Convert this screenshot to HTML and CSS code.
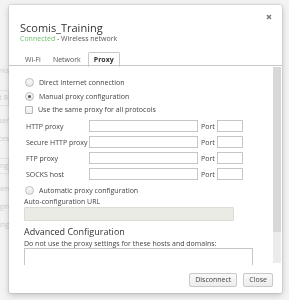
FILE: index.html
```html
<!DOCTYPE html>
<html lang="en">
<head>
    <meta charset="UTF-8">
    <title>Scomis_Training</title>
    <link rel="stylesheet" href="styles.css">
</head>
<body>
    <div class="page">
        <div class="page-row">Networks</div>
        <div class="page-row boxed">Reset R</div>
        <div class="page-row">User</div>
        <div class="page-row">Services</div>
        <div class="page-row boxed">Setting</div>
        <div class="page-row">Open</div>
        <div class="page-row">Login</div>
        <div class="page-row">Timing</div>
    </div>

    <div class="dialog">
        <button class="close" title="Close">
            <svg width="6" height="6" viewBox="0 0 6 6"><path d="M1 1L5 5M5 1L1 5" stroke="#777" stroke-width="1.4"/></svg>
        </button>
        <div class="head">
            <h1>Scomis_Training</h1>
            <p class="status"><span class="ok">Connected</span> - Wireless network</p>
        </div>
        <div class="tabs">
            <span class="tab">Wi-Fi</span>
            <span class="tab">Network</span>
            <span class="tab active">Proxy</span>
        </div>
        <div class="pane">
            <div class="scroll">
                <label class="opt"><span class="radio"></span>Direct Internet connection</label>
                <label class="opt"><span class="radio checked"></span>Manual proxy configuration</label>
                <label class="opt check-row"><span class="check"></span>Use the same proxy for all protocols</label>

                <div class="proxy-grid">
                    <span class="name">HTTP proxy</span><span class="field"></span><span class="port">Port</span><span class="field small"></span>
                    <span class="name">Secure HTTP proxy</span><span class="field"></span><span class="port">Port</span><span class="field small"></span>
                    <span class="name">FTP proxy</span><span class="field"></span><span class="port">Port</span><span class="field small"></span>
                    <span class="name">SOCKS host</span><span class="field"></span><span class="port">Port</span><span class="field small"></span>
                </div>

                <label class="opt auto"><span class="radio"></span>Automatic proxy configuration</label>
                <div class="sub-label">Auto-configuration URL</div>
                <div class="field url disabled"></div>

                <h2>Advanced Configuration</h2>
                <div class="desc">Do not use the proxy settings for these hosts and domains:</div>
                <div class="hosts"></div>
            </div>
            <div class="scrollbar"><div class="thumb"></div></div>
        </div>
        <div class="actions">
            <button class="btn">Disconnect</button>
            <button class="btn">Close</button>
        </div>
    </div>
</body>
</html>
```

FILE: styles.css
```css
body {
    margin: 0;
    width: 289px;
    height: 300px;
    overflow: hidden;
    background-color: #f3f3f3;
    font-family: 'Open Sans', 'Noto Sans', sans-serif;
    font-size: 7px;
    color: #444;
}
.page {
    width: 60px;
    margin-left: -51px;
    padding-top: 64px;
    text-align: right;
    color: #cfcfcf;
    font-size: 7px;
}
.page-row {
    height: 18px;
    line-height: 14px;
    white-space: nowrap;
}
.page-row.boxed {
    border: 1px solid #e4e4e4;
    height: 14px;
    margin: 8px 0;
}
.dialog {
    position: fixed;
    left: 9px;
    top: 5px;
    width: 273px;
    height: 288px;
    background: #fff;
    border-radius: 2px;
    box-shadow: 0 0 0 1px rgba(0, 0, 0, 0.07), 0 2px 6px rgba(0, 0, 0, 0.22);
    display: flex;
    flex-direction: column;
}
.close {
    position: absolute;
    right: 10px;
    top: 9px;
    padding: 0;
    border: 0;
    background: none;
    width: 6px;
    height: 6px;
    line-height: 0;
}
.head {
    padding: 17px 11px 0;
}
.head h1 {
    margin: 0;
    font-size: 11px;
    line-height: 12px;
    font-weight: 400;
    color: #333;
}
.status {
    margin: 0;
    line-height: 9px;
    color: #555;
}
.ok {
    color: #6cc26c;
}
.tabs {
    display: flex;
    margin-top: 10px;
    padding-left: 11px;
    border-bottom: 1px solid #c8c8c8;
    height: 12px;
}
.tab {
    padding: 0 5px;
    margin-right: 2px;
    line-height: 13px;
    color: #555;
}
.active {
    border: 1px solid #c8c8c8;
    border-bottom: 1px solid #fff;
    border-radius: 2px 2px 0 0;
    font-weight: 700;
    color: #333;
    line-height: 11px;
    height: 12px;
    padding-top: 1px;
    margin-top: -1px;
}
.pane {
    height: 199px;
    display: flex;
    overflow: hidden;
}
.scroll {
    flex: 1;
    padding: 9px 0 0 15px;
    overflow: hidden;
}
.scrollbar {
    width: 8px;
    margin: 1px 1px 2px 0;
    background: #ececec;
}
.thumb {
    height: 165px;
    background: #d8d8d8;
    border-radius: 1px;
}
.opt {
    display: flex;
    align-items: center;
    height: 14px;
    color: #444;
}
.check-row {
    height: 13px;
}
.radio {
    width: 7px;
    height: 7px;
    margin: 0 5px 0 1px;
    border: 1px solid #bdbdbd;
    border-radius: 50%;
    background: linear-gradient(#fafafa, #e6e6e6);
    display: flex;
    align-items: center;
    justify-content: center;
}
.radio.checked::after {
    content: '';
    width: 3px;
    height: 3px;
    border-radius: 50%;
    background: #555;
}
.check {
    width: 6px;
    height: 6px;
    margin: 0 5px 0 1px;
    border: 1px solid #b5b5b5;
    border-radius: 1px;
    background: linear-gradient(#fafafa, #ececec);
}
.proxy-grid {
    display: grid;
    grid-template-columns: 60px 109px 13px 26px;
    grid-auto-rows: 16px;
    column-gap: 3px;
    align-items: center;
    margin-top: 2px;
    margin-left: 2px;
}
.proxy-grid .name {
    white-space: nowrap;
}
.field {
    display: block;
    height: 10px;
    border: 1px solid #c6c6c6;
    background: #fff;
}
.field.small {
    width: 24px;
}
.auto {
    margin-top: 1px;
}
.sub-label {
    line-height: 10px;
}
.field.url {
    width: 208px;
    height: 12px;
}
.disabled {
    background: #ebebe6;
    border-color: #dcdcd4;
    border-radius: 1px;
}
h2 {
    margin: 5px 0 0;
    font-size: 9px;
    line-height: 12px;
    font-weight: 400;
    color: #333;
}
.desc {
    line-height: 9px;
    margin-top: 1px;
}
.hosts {
    width: 227px;
    height: 30px;
    border: 1px solid #c6c6c6;
}
.actions {
    display: flex;
    justify-content: flex-end;
    gap: 6px;
    padding: 8px 9px 0 0;
}
.btn {
    height: 14px;
    padding: 0 5px;
    border: 1px solid #c8c8c8;
    border-radius: 2px;
    background: linear-gradient(#fafafa, #ececec);
    font-family: 'Open Sans', 'Noto Sans', sans-serif;
    font-size: 7px;
    color: #444;
    line-height: 12px;
}
```
